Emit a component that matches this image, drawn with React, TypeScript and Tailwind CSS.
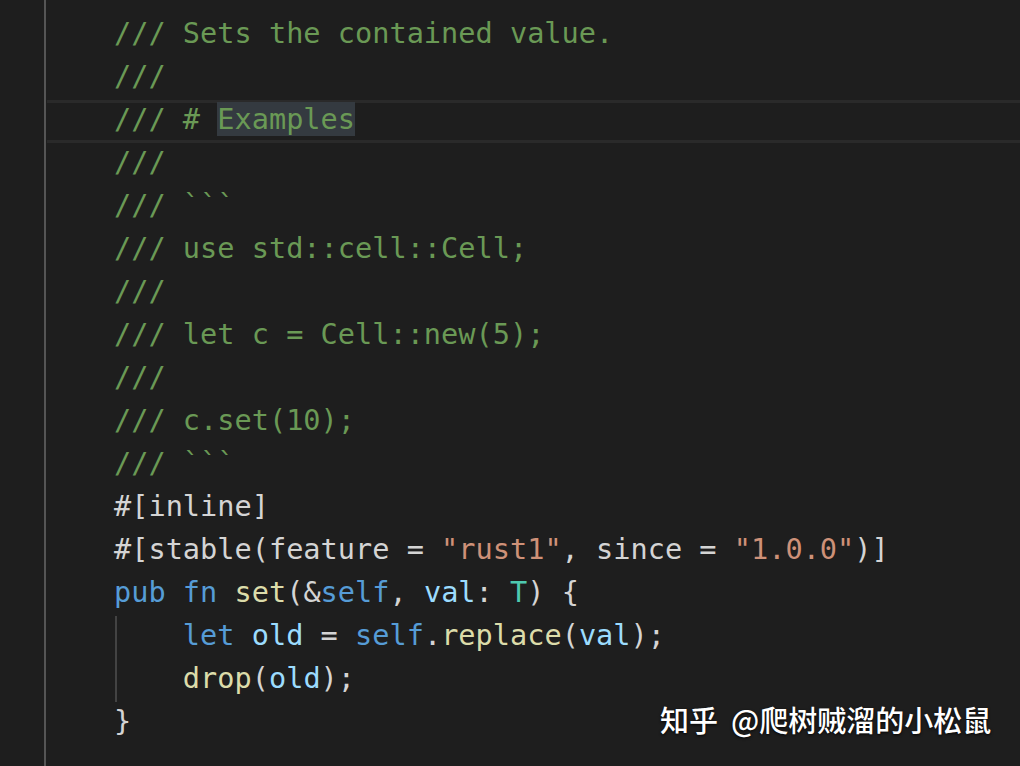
import React from "react";

type Tok = [string, string];

const C = {
  cm: "text-[#6a9955]",
  kw: "text-[#569cd6]",
  fn: "text-[#dcdcaa]",
  vr: "text-[#9cdcfe]",
  ty: "text-[#4ec9b0]",
  st: "text-[#ce9178]",
  pl: "text-[#d4d4d4]",
};

// one entry per editor line; indent = number of 4-space levels
const lines: { indent: number; toks: Tok[]; current?: boolean }[] = [
  { indent: 0, toks: [["cm", "/// Sets the contained value."]] },
  { indent: 0, toks: [["cm", "///"]] },
  { indent: 0, toks: [["cm", "/// # "], ["sel", "Examples"]], current: true },
  { indent: 0, toks: [["cm", "///"]] },
  { indent: 0, toks: [["cm", "/// ```"]] },
  { indent: 0, toks: [["cm", "/// use std::cell::Cell;"]] },
  { indent: 0, toks: [["cm", "///"]] },
  { indent: 0, toks: [["cm", "/// let c = Cell::new(5);"]] },
  { indent: 0, toks: [["cm", "///"]] },
  { indent: 0, toks: [["cm", "/// c.set(10);"]] },
  { indent: 0, toks: [["cm", "/// ```"]] },
  { indent: 0, toks: [["pl", "#[inline]"]] },
  {
    indent: 0,
    toks: [
      ["pl", "#[stable(feature = "],
      ["st", '"rust1"'],
      ["pl", ", since = "],
      ["st", '"1.0.0"'],
      ["pl", ")]"],
    ],
  },
  {
    indent: 0,
    toks: [
      ["kw", "pub fn "],
      ["fn", "set"],
      ["pl", "(&"],
      ["kw", "self"],
      ["pl", ", "],
      ["vr", "val"],
      ["pl", ": "],
      ["ty", "T"],
      ["pl", ") {"],
    ],
  },
  {
    indent: 1,
    toks: [
      ["kw", "let "],
      ["vr", "old"],
      ["pl", " = "],
      ["kw", "self"],
      ["pl", "."],
      ["fn", "replace"],
      ["pl", "("],
      ["vr", "val"],
      ["pl", ");"],
    ],
  },
  {
    indent: 1,
    toks: [
      ["fn", "drop"],
      ["pl", "("],
      ["vr", "old"],
      ["pl", ");"],
    ],
  },
  { indent: 0, toks: [["pl", "}"]] },
];

const Token = ({ kind, text }: { kind: string; text: string }) => {
  if (kind === "sel") {
    return <span className="bg-[#343a40] text-[#6a9955]">{text}</span>;
  }
  return <span className={C[kind as keyof typeof C]}>{text}</span>;
};

export default function App() {
  return (
    <div className="relative flex w-[1020px] h-[766px] overflow-hidden bg-[#1e1e1e]">
      {/* left gutter + divider */}
      <div className="w-[44px] shrink-0" />
      <div className="w-[2px] shrink-0 bg-[#555555]" />

      {/* code area */}
      <div className="flex-1 pt-[14px] font-['DejaVu_Sans_Mono','Liberation_Mono',monospace] text-[28.6px]">
        {lines.map((ln, i) => (
          <div
            key={i}
            className={`flex items-start h-[43px] whitespace-pre pl-[68px] ${
              ln.current ? "shadow-[inset_0_3px_0_#2a2a2a,inset_0_-3px_0_#2a2a2a] ml-px" : ""
            }`}
          >
            {ln.current && <span className="-ml-px" />}
            {Array.from({ length: ln.indent }).map((_, k) => (
              <span key={k} className="self-stretch w-[4ch] shrink-0 border-l-2 border-[#434343] ml-px -mr-px" />
            ))}
            <span className="leading-[39px]">
              {ln.toks.map(([kind, text], j) => (
                <Token key={j} kind={kind} text={text} />
              ))}
            </span>
          </div>
        ))}
      </div>

      {/* watermark */}
      <div className="absolute left-[660px] top-[705px] flex gap-[13px] font-['Noto_Sans_CJK_SC',sans-serif] text-[29px] leading-none font-medium text-white [text-shadow:0_1px_3px_rgba(0,0,0,0.9)]">
        <span>知乎</span>
        <span>@爬树贼溜的小松鼠</span>
      </div>
    </div>
  );
}
